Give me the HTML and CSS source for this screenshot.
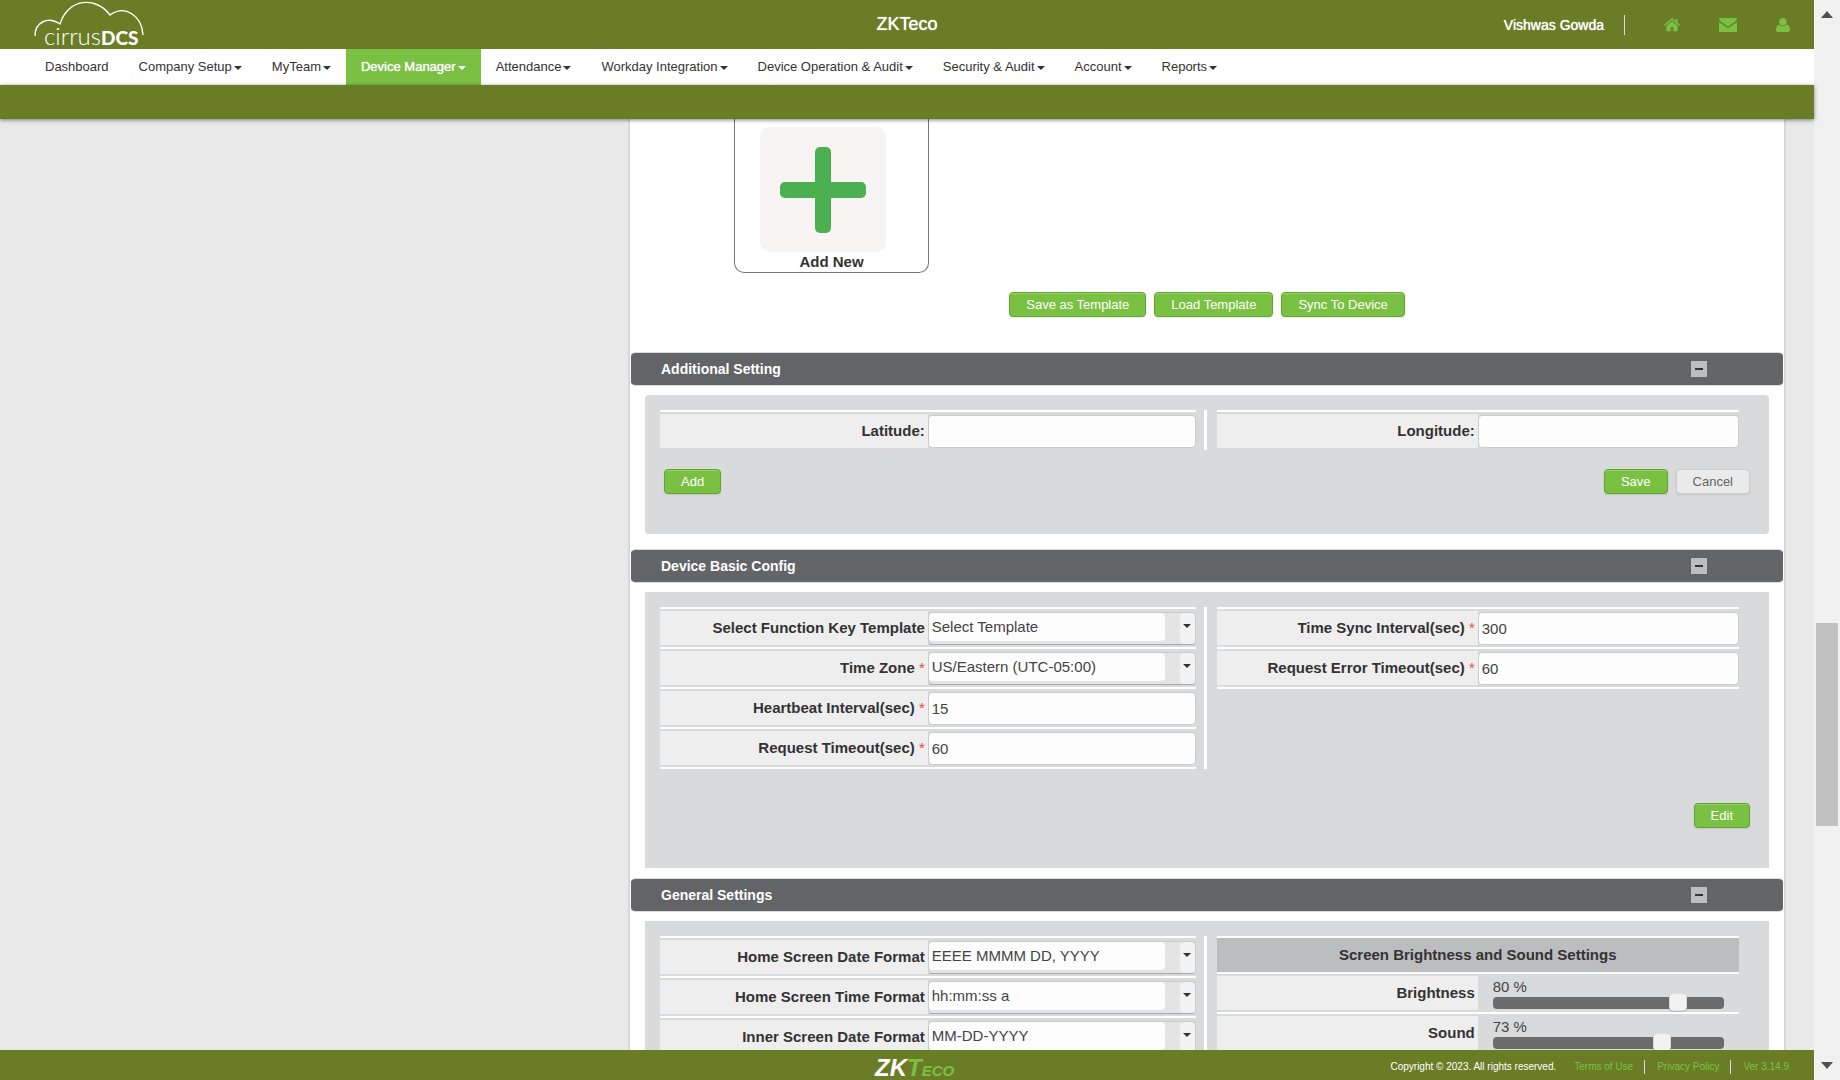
FILE: index.html
```html
<!DOCTYPE html>
<html lang="en">
<head>
<meta charset="utf-8">
<title>cirrusDCS - Device Manager</title>
<link rel="stylesheet" href="styles.css">
</head>
<body>
<div class="app">
  <header class="topbar">
    <a class="brand" href="#" aria-label="cirrusDCS">
      <svg width="112" height="49" viewBox="0 0 112 49">
        <path d="M1 36C1 22 14 16 26 24C34-2 62-4 76 15C91 4 108 16 109 35" fill="none" stroke="#fff" stroke-width="1.4"/>
        <text class="brand-text" x="10" y="45">cirrus<tspan class="brand-bold">DCS</tspan></text>
      </svg>
    </a>
    <h1 class="company">ZKTeco</h1>
    <div class="user-tools">
      <span class="user-name">Vishwas Gowda</span>
      <a href="#" aria-label="Home"><svg width="16" height="14" viewBox="0 0 16 14"><path d="M8 3.2L2.5 8V13.2H6.6V9.2H9.4V13.2H13.5V8Z"/><path d="M.6 7.4L8 1L15.4 7.4" fill="none" stroke="#7ac143" stroke-width="1.4"/><path d="M11.4 1H13.4V6L11.4 4.2Z"/></svg></a>
      <a href="#" aria-label="Messages"><svg width="18" height="14" viewBox="0 0 18 14"><path d="M1 0H17Q18 0 18 1.2Q17.800 2.500 16 3.800L10.500 7.600Q9 8.600 7.500 7.600L2 3.800Q.200 2.500 0 1.200Q0 0 1 0ZM0 3.900L7 8.900Q9 10 11 8.900L18 3.900V13Q18 14 17 14H1Q0 14 0 13Z"/></svg></a>
      <a href="#" aria-label="Profile"><svg width="14" height="14" viewBox="0 0 14 14"><circle cx="7" cy="3.700" r="3.700"/><path d="M3.200 6.400Q7 10.200 10.800 6.400Q14 7 14 12Q14 14 12 14H2Q0 14 0 12Q0 7 3.200 6.400Z"/></svg></a>
    </div>
  </header>
  <nav class="menu">
    <a href="#">Dashboard</a>
    <a class="drop" href="#">Company Setup</a>
    <a class="drop" href="#">MyTeam</a>
    <a class="drop active" href="#">Device Manager</a>
    <a class="drop" href="#">Attendance</a>
    <a class="drop" href="#">Workday Integration</a>
    <a class="drop" href="#">Device Operation &amp; Audit</a>
    <a class="drop" href="#">Security &amp; Audit</a>
    <a class="drop" href="#">Account</a>
    <a class="drop" href="#">Reports</a>
  </nav>
  <div class="subbar"></div>

  <main class="content">
    <div class="sheet">
      <a class="add-card" href="#">
        <span class="add-tile">
          <svg width="86" height="86" viewBox="0 0 86 86"><rect x="35" width="16" height="86" rx="5"/><rect y="35" width="86" height="16" rx="5"/></svg>
        </span>
        <span class="add-label">Add New</span>
      </a>
      <div class="template-actions">
        <button class="btn" type="button">Save as Template</button>
        <button class="btn" type="button">Load Template</button>
        <button class="btn" type="button">Sync To Device</button>
      </div>

      <section class="section">
        <div class="section-head"><h2>Additional Setting</h2><button class="toggle" type="button" aria-label="Collapse"></button></div>
        <form class="panel rounded">
          <div class="columns">
            <div class="col left">
              <div class="row"><label for="lat">Latitude:</label><input class="field" id="lat" type="text"></div>
            </div>
            <div class="divider"></div>
            <div class="col right">
              <div class="row"><label for="lng">Longitude:</label><input class="field" id="lng" type="text"></div>
            </div>
          </div>
          <div class="actions near">
            <button class="btn first" type="button">Add</button>
            <button class="btn" type="button">Save</button>
            <button class="btn plain" type="button">Cancel</button>
          </div>
        </form>
      </section>

      <section class="section">
        <div class="section-head"><h2>Device Basic Config</h2><button class="toggle" type="button" aria-label="Collapse"></button></div>
        <form class="panel">
          <div class="columns">
            <div class="col left closed">
              <div class="row"><label for="fkt">Select Function Key Template</label><div class="combo"><select id="fkt"><option>Select Template</option></select><span class="combo-arrow"></span></div></div>
              <div class="row"><label for="tz">Time Zone <span class="req">*</span></label><div class="combo"><select id="tz"><option>US/Eastern (UTC-05:00)</option></select><span class="combo-arrow"></span></div></div>
              <div class="row"><label for="hb">Heartbeat Interval(sec) <span class="req">*</span></label><input class="field" id="hb" type="text" value="15"></div>
              <div class="row"><label for="rt">Request Timeout(sec) <span class="req">*</span></label><input class="field" id="rt" type="text" value="60"></div>
            </div>
            <div class="divider"></div>
            <div class="col right closed">
              <div class="row"><label for="ts">Time Sync Interval(sec) <span class="req">*</span></label><input class="field" id="ts" type="text" value="300"></div>
              <div class="row"><label for="re">Request Error Timeout(sec) <span class="req">*</span></label><input class="field" id="re" type="text" value="60"></div>
            </div>
          </div>
          <div class="actions"><button class="btn" type="button">Edit</button></div>
        </form>
      </section>

      <section class="section">
        <div class="section-head"><h2>General Settings</h2><button class="toggle" type="button" aria-label="Collapse"></button></div>
        <form class="panel">
          <div class="columns">
            <div class="col left closed">
              <div class="row"><label for="hd">Home Screen Date Format</label><div class="combo"><select id="hd"><option>EEEE MMMM DD, YYYY</option></select><span class="combo-arrow"></span></div></div>
              <div class="row"><label for="ht">Home Screen Time Format</label><div class="combo"><select id="ht"><option>hh:mm:ss a</option></select><span class="combo-arrow"></span></div></div>
              <div class="row"><label for="id">Inner Screen Date Format</label><div class="combo"><select id="id"><option>MM-DD-YYYY</option></select><span class="combo-arrow"></span></div></div>
            </div>
            <div class="divider"></div>
            <div class="col right closed">
              <h3 class="group-title">Screen Brightness and Sound Settings</h3>
              <div class="row"><label for="br">Brightness</label><div class="slider"><output for="br">80 %</output><div class="slider-track"><input id="br" type="range" min="0" max="100" value="80"></div></div></div>
              <div class="row"><label for="so">Sound</label><div class="slider"><output for="so">73 %</output><div class="slider-track"><input id="so" type="range" min="0" max="100" value="73"></div></div></div>
            </div>
          </div>
        </form>
      </section>
    </div>
  </main>

  <footer class="footer">
    <svg class="footer-logo" width="98" height="30" viewBox="0 0 98 30">
      <text class="logo-text" x="17" y="26">ZK<tspan class="logo-green">T</tspan><tspan class="logo-green logo-small">ECO</tspan></text>
    </svg>
    <div class="legal">
      <span class="copyright">Copyright © 2023. All rights reserved.</span>
      <a href="#">Terms of Use</a>
      <a href="#">Privacy Policy</a>
      <a href="#">Ver 3.14.9</a>
    </div>
  </footer>
</div>
<div class="scrollbar" aria-hidden="true">
  <span class="arrow up"></span>
  <span class="track"><span class="thumb"></span></span>
  <span class="arrow down"></span>
</div>
</body>
</html>
```
FILE: styles.css
```css
* { box-sizing: border-box; }

body {
  margin: 0;
  height: 100vh;
  display: grid;
  grid-template-columns: minmax(0, 1fr) 26px;
  overflow: hidden;
  background: #e9e9e9;
  color: #333;
  font-family: "Liberation Sans", Arial, sans-serif;
  font-size: 15px;
}

h1, h2, h3 { margin: 0; }
a { text-decoration: none; color: inherit; }
svg { display: block; overflow: visible; }

.app {
  display: flex;
  flex-direction: column;
  height: 100vh;
}

/* Header */
.topbar {
  flex: none;
  height: 49px;
  padding: 0 24px;
  display: grid;
  grid-template-columns: 1fr auto 1fr;
  align-items: center;
  background: #6a7d26;
  color: #fff;
}
.brand { margin-left: 10px; }
.brand-text {
  fill: #fff;
  font-family: Lato, sans-serif;
  font-size: 24px;
  font-weight: 300;
}
.brand-bold { font-weight: 900; font-size: 19px; }
.company {
  font-size: 18px;
  font-weight: 400;
  text-shadow: 0 0 1px #fff;
}
.user-tools {
  display: flex;
  align-items: center;
  justify-content: flex-end;
  gap: 39px;
}
.user-tools svg { fill: #7ac143; }
.user-name {
  padding-right: 20px;
  border-right: 1px solid #d9dadc;
  font-size: 14px;
  line-height: 20px;
  text-shadow: 0 0 1px #fff;
}

.menu {
  flex: none;
  display: flex;
  padding: 0 30px;
  background: #fff;
  font-size: 13px;
  line-height: 36px;
}
.menu a { padding: 0 15px; white-space: nowrap; }
.menu .active {
  background: #7ac143;
  color: #fff;
  text-shadow: 0 0 1px #fff;
}
.drop::after {
  content: "";
  display: inline-block;
  margin-left: 2px;
  vertical-align: 1px;
  border: 4px solid transparent;
  border-top-color: currentColor;
  border-bottom: 0;
}
.subbar {
  flex: none;
  height: 34px;
  background: #6a7d26;
  box-shadow: 0 1px 4px rgba(0, 0, 0, .5);
  z-index: 1;
}

/* Scrolled page */
.content {
  flex: 1;
  min-height: 0;
  overflow: hidden;
  padding: 0 30px 0 630px;
}
.sheet {
  min-height: 100%;
  padding-right: 1px;
  padding-left: 1px;
  background: #fff;
  box-shadow: 0 0 3px rgba(0, 0, 0, .25);
}
.add-card {
  display: block;
  width: 195px;
  margin-left: 103px;
  padding: 8px 25px 0;
  border: 1px solid #777;
  border-top: 0;
  border-radius: 0 0 10px 10px;
}
.add-tile {
  display: grid;
  place-items: center;
  width: 126px;
  height: 125px;
  border-radius: 10px;
  background: #f8f4f4;
}
.add-tile svg { fill: #4caf50; }
.add-label {
  display: block;
  text-align: center;
  font-weight: 700;
  line-height: 20px;
}
.template-actions {
  display: flex;
  justify-content: center;
  gap: 8px;
  padding: 19px 0 35px;
}

.btn {
  height: 25px;
  padding: 0 16px;
  border: 1px solid #5fa52b;
  border-radius: 4px;
  background: #7ac143;
  box-shadow: inset 0 1px 0 rgba(255, 255, 255, .25), 0 1px 2px rgba(0, 0, 0, .1);
  color: #fff;
  font: 13px "Liberation Sans", Arial, sans-serif;
}
.btn.plain {
  border-color: #ccc;
  background: #eaeaea;
  color: #666;
}

.section-head {
  display: flex;
  align-items: center;
  justify-content: space-between;
  height: 34px;
  padding: 0 76px 0 30px;
  border: 1px solid #dcdcdc;
  border-width: 1px 0;
  border-radius: 4px;
  background: #636468;
  background-clip: padding-box;
  color: #fff;
}
.section-head h2 { font-size: 14px; }
.toggle {
  display: grid;
  place-items: center;
  width: 16px;
  height: 16px;
  padding: 0;
  border: 0;
  background: #bcbdbf;
}
.toggle::before {
  content: "";
  width: 8px;
  height: 2px;
  background: #333;
}

.panel {
  margin: 9px 14px 10px;
  padding: 15px 19px 40px 15px;
  background: #d9dadc;
}
.panel.rounded {
  margin-bottom: 15px;
  border-radius: 4px;
}
.columns {
  display: flex;
  align-items: stretch;
  padding-right: 11px;
}
.divider {
  flex: none;
  width: 3px;
  margin: 0 10px 0 8px;
  background: #fff;
}
.col { min-width: 0; }
.left { flex: 536 1 0; }
.right { flex: 523 1 0; align-self: flex-start; }
.closed { border-bottom: 2px solid #fff; }

.row {
  display: grid;
  grid-template-columns: 1fr 1fr;
  height: 40px;
  padding: 2px 0;
  border-top: 2px solid #fff;
}
.row label {
  padding-right: 3px;
  background: #eee;
  text-align: right;
  font-weight: 700;
  line-height: 34px;
  white-space: nowrap;
}
.req {
  color: #f44336;
  font-weight: 400;
}
.field, .combo {
  width: 100%;
  height: 33px;
  margin-top: 1px;
  border: 1px solid #ccc;
  border-radius: 4px;
  background: #fdfdfd;
}
.field, .combo select {
  padding: 0 4px 1px 3px;
  color: #444;
  font: 15px "Liberation Sans", Arial, sans-serif;
}
.combo {
  display: flex;
  justify-content: space-between;
  border-bottom-color: #aaa;
  background: #e4e4e4;
}
.combo select {
  flex: 0 1 236px;
  height: 28px;
  appearance: none;
  border: 0;
  border-radius: 4px;
  background: #fdfdfd;
}
.combo-arrow {
  display: grid;
  place-items: center;
  width: 15px;
  padding-bottom: 5px;
  border-radius: 4px;
  background: #f2f2f2;
}
.combo-arrow::before {
  content: "";
  border: 4px solid transparent;
  border-top-color: #333;
  border-bottom: 0;
}

.group-title {
  border-top: 2px solid #fff;
  background: #bcbdbf;
  text-align: center;
  font-size: 15px;
  line-height: 34px;
}
.slider {
  padding: 2px 15px 0;
}
.slider output {
  display: block;
  line-height: 18px;
  color: #444;
}
.slider-track {
  display: flex;
  align-items: center;
  height: 12px;
  margin-top: 1px;
  border-radius: 4px;
  background: #6b6b6b;
}
.slider-track input {
  flex: 1;
  height: 18px;
  margin: 0 -9px 2px;
  appearance: none;
  background: none;
}
.slider-track input::-webkit-slider-thumb {
  appearance: none;
  width: 18px;
  height: 18px;
  border: 1px solid #ddd;
  border-radius: 4px;
  background: #f2f2f2;
  box-shadow: 0 1px 1px rgba(0, 0, 0, .15);
}

.actions {
  display: flex;
  justify-content: flex-end;
  gap: 8px;
  padding-top: 34px;
}
.actions.near { padding-top: 19px; }
.first { margin-right: auto; margin-left: 4px; }

/* Footer */
.footer {
  flex: none;
  display: grid;
  grid-template-columns: 1fr auto 1fr;
  align-items: center;
  height: 30px;
  padding: 0 25px;
  background: #6a7d26;
  color: #fff;
  font-size: 10px;
  z-index: 1;
}
.footer-logo { grid-column: 2; }
.logo-text {
  fill: #fff;
  font-size: 24px;
  font-weight: 700;
  font-style: italic;
}
.logo-green { fill: #7ac143; }
.logo-small { font-size: 15px; }
.legal {
  display: flex;
  justify-content: flex-end;
  padding-top: 4px;
  line-height: 14px;
}
.legal a { color: #7ac143; }
.copyright { margin-right: 18px; }
.legal a + a {
  margin-left: 11px;
  padding-left: 12px;
  border-left: 1px solid #d9dadc;
}

/* Scroll track */
.scrollbar {
  display: flex;
  flex-direction: column;
  align-items: center;
  padding: 11px 0;
  background: #f1f1f1;
}
.arrow { border: 6px solid transparent; }
.up { border-top: 0; border-bottom: 7px solid #505050; }
.down { border-bottom: 0; border-top: 7px solid #505050; }
.track {
  flex: 1;
  display: flex;
  flex-direction: column;
}
.track::before { content: ""; flex: 604 1 0; }
.track::after { content: ""; flex: 236 1 0; }
.thumb {
  flex: 203 1 0;
  width: 22px;
  background: #c1c1c1;
}
```
